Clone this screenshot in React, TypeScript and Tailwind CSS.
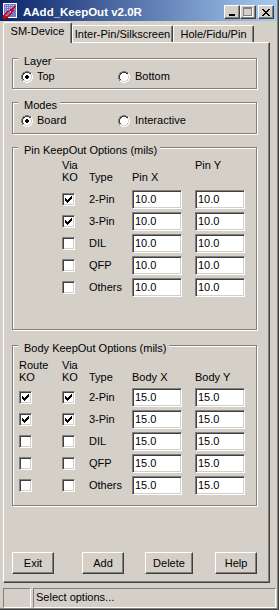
import React from "react";

type PixProps = { map: string[]; colors: Record<string, string> };
function Pix({ map, colors }: PixProps) {
  const rects: React.ReactElement[] = [];
  map.forEach((row, y) =>
    [...row].forEach((c, x) => {
      if (colors[c])
        rects.push(<rect key={`${x}-${y}`} x={x} y={y} width={1} height={1} fill={colors[c]} />);
    })
  );
  return (
    <svg width={map[0].length} height={map.length} shapeRendering="crispEdges" className="block">
      {rects}
    </svg>
  );
}

const ICON = [
  "WWWWWWWWWWWWWW..",
  "WBBBBBBBBBBBBW..",
  "WBLBLBLBLBLBBW..",
  "WBBBBBBBBBBRRW..",
  "WBLBLBLBLBRRBW..",
  "WBBBBBBBBRRBBW..",
  "WBLBLBLRRRBBBW..",
  "WBBBBBRRRRRBBW..",
  "WBLBRRBLRRBBBW..",
  "WBBRRBBBRBBBBW..",
  "WBRRBBBRRBBBBW..",
  "WRRBBBRRBBBBBW..",
  "RRBBBRRBBBBBBW..",
  "RRRRRRBBBBBBBW..",
  "RRRRRWWWWWWWWW..",
  "RRR.............",
];

const RADIO = [
  "....GGGG....",
  "..GGDDDDGG..",
  ".GDDWWWWDDW.",
  ".GDWWWWWWLW.",
  "GDWWWWWWWWLW",
  "GDWWWWWWWWLW",
  "GDWWWWWWWWLW",
  "GDWWWWWWWWLW",
  ".GDWWWWWWLW.",
  ".GLLWWWWLLW.",
  "..WWLLLLWW..",
  "....WWWW....",
];
const RADIO_ON = [
  "....GGGG....",
  "..GGDDDDGG..",
  ".GDDWWWWDDW.",
  ".GDWWWWWWLW.",
  "GDWWWXXWWWLW",
  "GDWWXXXXWWLW",
  "GDWWXXXXWWLW",
  "GDWWWXXWWWLW",
  ".GDWWWWWWLW.",
  ".GLLWWWWLLW.",
  "..WWLLLLWW..",
  "....WWWW....",
];
const RC = { G: "#808080", D: "#404040", W: "#ffffff", L: "#d4d0c8", X: "#000000" };

const CHECK = [
  "......X",
  ".....XX",
  "X...XXX",
  "XX.XXX.",
  "XXXXX..",
  ".XXX...",
  "..X....",
];

const CLOSE = [
  "XX....XX",
  ".XX..XX.",
  "..XXXX..",
  "...XX...",
  "..XXXX..",
  ".XX..XX.",
  "XX....XX",
];
const MAXI = [
  "GGGGGGGGG.",
  "GGGGGGGGGW",
  "G.......GW",
  "G.......GW",
  "G.......GW",
  "G.......GW",
  "G.......GW",
  "G.......GW",
  "GGGGGGGGGW",
  ".WWWWWWWWW",
];
const MINI = ["XXXXXX", "XXXXXX"];

function Radio({ on }: { on?: boolean }) {
  return <Pix map={on ? RADIO_ON : RADIO} colors={RC} />;
}

function Check({ on }: { on?: boolean }) {
  return (
    <div className="relative w-[13px] h-[13px] shrink-0 bg-white border border-t-[#808080] border-l-[#808080] border-b-white border-r-white shadow-[inset_1px_1px_0_#404040,inset_-1px_-1px_0_#d4d0c8]">
      {on && (
        <div className="absolute left-[2px] top-[2px]">
          <Pix map={CHECK} colors={{ X: "#000000" }} />
        </div>
      )}
    </div>
  );
}

function Field({ value }: { value: string }) {
  return (
    <div className="w-[50px] h-[19px] bg-white border border-t-[#808080] border-l-[#808080] border-b-white border-r-white shadow-[inset_1px_1px_0_#404040,inset_-1px_-1px_0_#d4d0c8] pl-[2px] pt-[2px] leading-[13px]">
      {value}
    </div>
  );
}

function Group({ title, className, children }: { title: string; className: string; children: React.ReactNode }) {
  return (
    <div
      className={`relative w-[245px] border border-[#808080] shadow-[inset_1px_1px_0_#ffffff,1px_1px_0_#ffffff] ${className}`}
    >
      <span className="absolute left-[5px] top-[-4px] bg-[#d4d0c8] pl-[6px] pr-[3px] leading-[13px] whitespace-nowrap">
        {title}
      </span>
      {children}
    </div>
  );
}

function CapBtn({ children }: { children: React.ReactNode }) {
  return (
    <div className="w-[16px] h-[14px] bg-[#d4d0c8] border border-t-white border-l-white border-b-[#404040] border-r-[#404040] shadow-[inset_-1px_-1px_0_#808080] flex items-center justify-center">
      {children}
    </div>
  );
}

function PushBtn({ label, className }: { label: string; className: string }) {
  return (
    <div
      className={`h-[22px] bg-[#d4d0c8] border border-t-white border-l-white border-b-[#404040] border-r-[#404040] shadow-[inset_-1px_-1px_0_#808080] flex items-center justify-center leading-[13px] ${className}`}
    >
      {label}
    </div>
  );
}

const types = ["2-Pin", "3-Pin", "DIL", "QFP", "Others"];

export default function App() {
  return (
    <div className="w-[279px] h-[610px] bg-[#d4d0c8] border-r border-b border-r-[#404040] border-b-[#404040] overflow-hidden font-['Liberation_Sans',Arial,sans-serif] text-[11px] leading-[13px] text-black">
      <div className="h-full border-r border-b border-r-[#808080] border-b-[#808080] flex flex-col">
        {/* Title bar */}
        <div className="h-[21px] shrink-0 flex items-start bg-[linear-gradient(to_right,#0a246a,#a6caf0)]">
          <div className="ml-[3px] mt-[3px]">
            <Pix
              map={ICON}
              colors={{ W: "#ffffff", B: "#7878c8", L: "#c8c8ff", R: "#e00000" }}
            />
          </div>
          <div className="ml-[4px] mt-[6px] text-white font-bold text-[11.5px] leading-[13px] whitespace-nowrap">
            AAdd_KeepOut v2.0R
          </div>
          <div className="flex-1" />
          <div className="mt-[5px] flex">
            <CapBtn>
              <div className="mt-[6px] -ml-[1px]">
                <Pix map={MINI} colors={{ X: "#000000" }} />
              </div>
            </CapBtn>
            <CapBtn>
              <Pix map={MAXI} colors={{ G: "#808080", W: "#ffffff" }} />
            </CapBtn>
            <div className="ml-[2px] mr-[3px]">
              <CapBtn>
                <Pix map={CLOSE} colors={{ X: "#000000" }} />
              </CapBtn>
            </div>
          </div>
        </div>

        {/* Tabs */}
        <div className="h-[21px] shrink-0 flex items-end pl-[3px]">
          <div className="relative z-10 -mb-px w-[69px] h-[21px] bg-[#d4d0c8] border-t border-l border-r border-t-white border-l-white border-r-[#404040] shadow-[inset_-1px_0_0_#808080] rounded-tl-[2px] rounded-tr-[2px] flex justify-center pt-[2px] whitespace-nowrap">
            SM-Device
          </div>
          <div className="w-[101px] h-[17px] border-t border-l border-r border-t-white border-l-white border-r-[#404040] shadow-[inset_-1px_0_0_#808080] rounded-tl-[2px] rounded-tr-[2px] flex justify-center pt-[2px] whitespace-nowrap">
            Inter-Pin/Silkscreen
          </div>
          <div className="w-[81px] h-[17px] border-t border-l border-r border-t-white border-l-white border-r-[#404040] shadow-[inset_-1px_0_0_#808080] rounded-tl-[2px] rounded-tr-[2px] flex justify-center pt-[2px] whitespace-nowrap">
            Hole/Fidu/Pin
          </div>
        </div>

        {/* Tab panel */}
        <div className="ml-[3px] w-[267px] h-[541px] shrink-0 border border-t-white border-l-white border-b-[#404040] border-r-[#404040] shadow-[inset_-1px_-1px_0_#808080] flex flex-col pl-[8px]">
          <Group title="Layer" className="mt-[15px] h-[31px] pt-[11px] pl-[8px]">
            <div className="flex h-[13px]">
              <div className="w-[97px] flex items-center gap-[4px]">
                <Radio on />
                <span>Top</span>
              </div>
              <div className="flex items-center gap-[5px]">
                <Radio />
                <span>Bottom</span>
              </div>
            </div>
          </Group>

          <Group title="Modes" className="mt-[13px] h-[32px] pt-[11px] pl-[8px]">
            <div className="flex h-[13px]">
              <div className="w-[97px] flex items-center gap-[4px]">
                <Radio on />
                <span>Board</span>
              </div>
              <div className="flex items-center gap-[5px]">
                <Radio />
                <span>Interactive</span>
              </div>
            </div>
          </Group>

          <Group title="Pin KeepOut Options (mils)" className="mt-[13px] h-[183px] pt-[11px]">
            <div className="flex leading-[12px]">
              <div className="w-[49px]" />
              <div className="w-[27px]">
                <div>Via</div>
                <div>KO</div>
              </div>
              <div className="w-[43px] pt-[12px]">Type</div>
              <div className="w-[63px] pt-[12px]">Pin X</div>
              <div>Pin Y</div>
            </div>
            <div className="mt-[7px] flex flex-col gap-[3px]">
              {types.map((t, i) => (
                <div key={t} className="flex items-center h-[19px]">
                  <div className="w-[49px]" />
                  <div className="w-[27px]">
                    <Check on={i < 2} />
                  </div>
                  <div className="w-[43px]">{t}</div>
                  <div className="w-[63px]">
                    <Field value="10.0" />
                  </div>
                  <Field value="10.0" />
                </div>
              ))}
            </div>
          </Group>

          <Group title="Body KeepOut Options (mils)" className="mt-[15px] h-[161px] pt-[13px]">
            <div className="flex leading-[12px]">
              <div className="w-[6px]" />
              <div className="w-[43px]">
                <div>Route</div>
                <div>KO</div>
              </div>
              <div className="w-[27px]">
                <div>Via</div>
                <div>KO</div>
              </div>
              <div className="w-[43px] pt-[12px]">Type</div>
              <div className="w-[63px] pt-[12px]">Body X</div>
              <div className="pt-[12px]">Body Y</div>
            </div>
            <div className="mt-[5px] flex flex-col gap-[3px]">
              {types.map((t, i) => (
                <div key={t} className="flex items-center h-[19px]">
                  <div className="w-[6px]" />
                  <div className="w-[43px]">
                    <Check on={i < 2} />
                  </div>
                  <div className="w-[27px]">
                    <Check on={i < 2} />
                  </div>
                  <div className="w-[43px]">{t}</div>
                  <div className="w-[63px]">
                    <Field value="15.0" />
                  </div>
                  <Field value="15.0" />
                </div>
              ))}
            </div>
          </Group>

          <div className="mt-[46px] flex">
            <PushBtn label="Exit" className="w-[42px]" />
            <PushBtn label="Add" className="ml-[28px] w-[42px]" />
            <PushBtn label="Delete" className="ml-[21px] w-[48px]" />
            <PushBtn label="Help" className="ml-[22px] w-[42px]" />
          </div>
        </div>

        {/* Status bar */}
        <div className="mt-[5px] h-[20px] shrink-0 flex pl-[3px]">
          <div className="w-[28px] h-full border border-t-[#808080] border-l-[#808080] border-b-white border-r-white" />
          <div className="ml-[2px] w-[243px] h-full border border-t-[#808080] border-l-[#808080] border-b-white border-r-white pl-[2px] pt-[2px] whitespace-nowrap">
            Select options...
          </div>
        </div>
      </div>
    </div>
  );
}
